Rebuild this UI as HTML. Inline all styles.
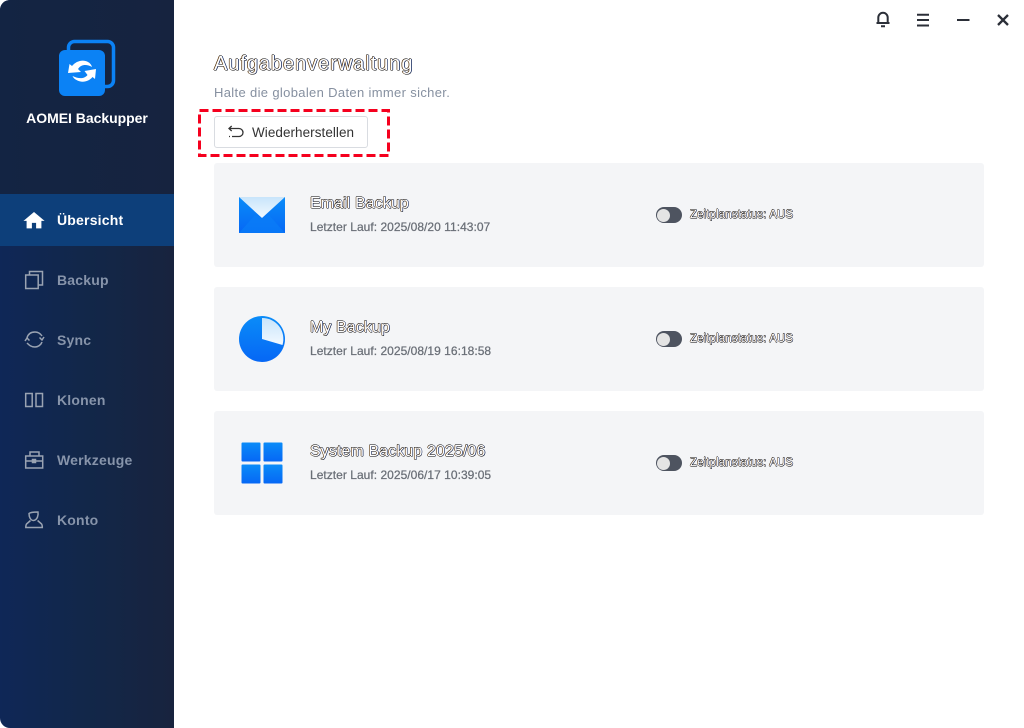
<!DOCTYPE html>
<html lang="de">
<head>
<meta charset="utf-8">
<title>AOMEI Backupper</title>
<style>
html,body{margin:0;padding:0;background:#fff;}
body{width:1024px;height:728px;position:relative;overflow:hidden;font-family:"Liberation Sans",sans-serif;}
.side{position:absolute;left:0;top:0;width:174px;height:728px;border-radius:10px 0 0 10px;background:linear-gradient(90deg,#0f2757 0%,#122749 50%,#18233e 100%);overflow:hidden;}
.sidetop{position:absolute;left:0;top:0;width:174px;height:194px;background:linear-gradient(90deg,#132443,#16233f);}
.active{position:absolute;left:0;top:194px;width:174px;height:52px;background:#0d3f7a;}
.brand{position:absolute;left:0;top:110px;width:174px;text-align:center;color:#fff;font-size:14px;font-weight:bold;line-height:16px;letter-spacing:-.03px;}
.nav{position:absolute;left:57px;font-size:14px;font-weight:bold;color:#8794aa;line-height:16px;letter-spacing:.2px;}
.ico{position:absolute;left:0;top:0;}
.t{position:absolute;white-space:nowrap;}
.title{left:214px;top:53px;font-size:20px;line-height:22px;letter-spacing:.95px;color:#fff;text-shadow:-.7px 0 #5a3408,.7px 0 #0a2058,0 -.6px #000,0 .6px #000,-.5px -.4px #000,.5px .4px #000;}
.sub{left:214px;top:85px;font-size:13px;line-height:16px;color:#8690a0;letter-spacing:.34px;}
.btn{position:absolute;left:214px;top:116px;width:154px;height:32px;box-sizing:border-box;border:1px solid #d9dce1;border-radius:3px;background:#fff;}
.btxt{left:252px;top:125px;font-size:13.5px;line-height:16px;color:#333;letter-spacing:.05px;}
.card{position:absolute;left:214px;width:770px;height:104px;background:#f4f5f7;border-radius:3px;}
.name{left:310px;font-size:16px;line-height:16px;letter-spacing:.1px;color:#fff;text-shadow:-.6px 0 #5a3408,.6px 0 #0a2058,0 -.5px #000,0 .5px #000,-.4px -.3px #000,.4px .3px #000;}
.last{left:310px;font-size:12px;line-height:14px;color:#6a6f77;letter-spacing:.03px;-webkit-text-stroke:.25px #6a6f77;}
.tog{position:absolute;left:656px;width:26px;height:16px;border-radius:8px;background:#4e5460;}
.tog i{position:absolute;left:1px;top:1.500px;width:13px;height:13px;border-radius:50%;background:#e4e4e4;}
.st{left:690px;font-size:11.5px;line-height:14px;letter-spacing:.12px;color:#fff;text-shadow:-.5px 0 #5a3408,.5px 0 #0a2058,0 -.45px #000,0 .45px #000,-.35px -.3px #000,.35px .3px #000;}
</style>
</head>
<body>
<div class="side">
  <div class="sidetop"></div>
  <div class="active"></div>
  <svg class="ico" width="174" height="110" viewBox="0 0 174 110">
    <rect x="68.500" y="41.500" width="45" height="45" rx="6" fill="none" stroke="#0b82f5" stroke-width="3.500"/>
    <rect x="59" y="50" width="46" height="46" rx="6" fill="#0b82f5"/>
    <path d="M68 73l1.500-9 2.500 2c4-5 11-7 16-4 2 1 3.500 3 4 5-5-3-11-3-14 2l3 3z" fill="#fff"/>
    <path d="M96 69l-1 10-2.500-2c-4 5-11 6-16 3-2-1-3-2-4-4 6 3 12 3 15-1l-3-4z" fill="#fff"/>
  </svg>
  <div class="brand">AOMEI Backupper</div>

  <svg class="ico" width="60" height="540" viewBox="0 0 60 540" fill="none" stroke="#9aa3b2" stroke-width="1.500">
    <path d="M24.500 220.500l9.500-8 9.500 8h-2.500v7.500h-4.500v-5.500h-5v5.500H27v-7.500z" fill="#fff" stroke="#fff" stroke-width=".8"/>
    <rect x="25.700" y="275" width="12.500" height="13.500"/>
    <path d="M29.500 275v-3.500h13V285h-4"/>
    <path d="M27 338c1-4 4-6 8-6 3 0 5 1 7 4M42 342c-1 3-4 5-7 5-4 0-6-2-8-4"/>
    <path d="M25 341l2-3 2.500 2.500M44 337l-2 3-2.500-2.500"/>
    <rect x="25.700" y="393.500" width="6.500" height="13"/>
    <rect x="36" y="393.500" width="6.500" height="13"/>
    <rect x="25.700" y="456" width="17" height="12"/>
    <path d="M30 456v-4h9v4M25.700 461h17"/>
    <rect x="32.500" y="459.500" width="3" height="3" fill="#9aa3b2"/>
    <path d="M29 513.500c1-1 4-1.500 9-1.500.5 3-.5 8-4.500 8.500-3 0-4.500-3.500-4.500-7zM30.500 520.500l-4 3.500c-.7 1-.7 3.500-.7 3.500h16.500s0-2.500-.7-3.500l-4-3.500"/>
  </svg>
  <div class="nav" style="top:212px;color:#fff;">Übersicht</div>
  <div class="nav" style="top:272px;">Backup</div>
  <div class="nav" style="top:332px;">Sync</div>
  <div class="nav" style="top:392px;">Klonen</div>
  <div class="nav" style="top:452px;">Werkzeuge</div>
  <div class="nav" style="top:512px;">Konto</div>
</div>

<svg class="ico" width="1024" height="40" viewBox="0 0 1024 40" fill="none" stroke="#2b2f38" stroke-width="2">
  <path d="M876.500 23h13M878.300 23v-5.500a4.700 4.700 0 0 1 9.400 0V23M881 26.300h4"/>
  <path d="M917 14.700h12M917 20h12M917 25.500h12"/>
  <path d="M957 20h12.500"/>
  <path d="M998 15l10 10M1008 15l-10 10" stroke-width="2.300"/>
</svg>

<div class="t title">Aufgabenverwaltung</div>
<div class="t sub">Halte die globalen Daten immer sicher.</div>
<div class="btn"></div>
<svg class="ico" width="400" height="170" viewBox="0 0 400 170" fill="none">
  <rect x="199.500" y="110.500" width="189" height="45" stroke="#f5001e" stroke-width="3" stroke-dasharray="9 4"/>
  <path d="M229 128.500h10a4 4 0 0 1 0 8h-7M231.700 126l-2.700 2.500 2.700 2.500M229 136.500h1" stroke="#333" stroke-width="1.300"/>
</svg>
<div class="t btxt">Wiederherstellen</div>

<div class="card" style="top:163px;"></div>
<div class="card" style="top:287px;"></div>
<div class="card" style="top:411px;"></div>

<svg class="ico" width="300" height="500" viewBox="0 0 300 500">
  <defs>
    <linearGradient id="b" x1="0" y1="0" x2="0" y2="1"><stop offset="0" stop-color="#0a8cf8"/><stop offset="1" stop-color="#0667f5"/></linearGradient>
    <linearGradient id="w" x1="0" y1="0" x2="0" y2="1"><stop offset="0" stop-color="#c8e4fb"/><stop offset="1" stop-color="#f2f9ff"/></linearGradient>
  </defs>
  <rect x="239" y="197" width="46" height="36" fill="url(#b)"/>
  <path d="M239 197h46l-23 21z" fill="url(#w)"/>
  <path d="M239 233l16-18 7 3 7-3 16 18z" fill="#0a7ef8" opacity=".7"/>
  <circle cx="262" cy="339" r="23" fill="url(#b)"/>
  <path d="M262 339V318A21 21 0 0 1 282.500 345Z" fill="url(#w)"/>
  <rect x="241.500" y="442.500" width="19" height="19" rx="1" fill="url(#b)"/>
  <rect x="263.500" y="442.500" width="19" height="19" rx="1" fill="url(#b)"/>
  <rect x="241.500" y="464.500" width="19" height="19" rx="1" fill="url(#b)"/>
  <rect x="263.500" y="464.500" width="19" height="19" rx="1" fill="url(#b)"/>
</svg>

<div class="t name" style="top:195.500px;">Email Backup</div>
<div class="t last" style="top:220px;">Letzter Lauf: 2025/08/20 11:43:07</div>
<div class="tog" style="top:207px;"><i></i></div>
<div class="t st" style="top:208px;">Zeitplanstatus: AUS</div>

<div class="t name" style="top:319.500px;">My Backup</div>
<div class="t last" style="top:344px;">Letzter Lauf: 2025/08/19 16:18:58</div>
<div class="tog" style="top:331px;"><i></i></div>
<div class="t st" style="top:332px;">Zeitplanstatus: AUS</div>

<div class="t name" style="top:443.500px;">System Backup 2025/06</div>
<div class="t last" style="top:468px;">Letzter Lauf: 2025/06/17 10:39:05</div>
<div class="tog" style="top:455px;"><i></i></div>
<div class="t st" style="top:456px;">Zeitplanstatus: AUS</div>
</body>
</html>
